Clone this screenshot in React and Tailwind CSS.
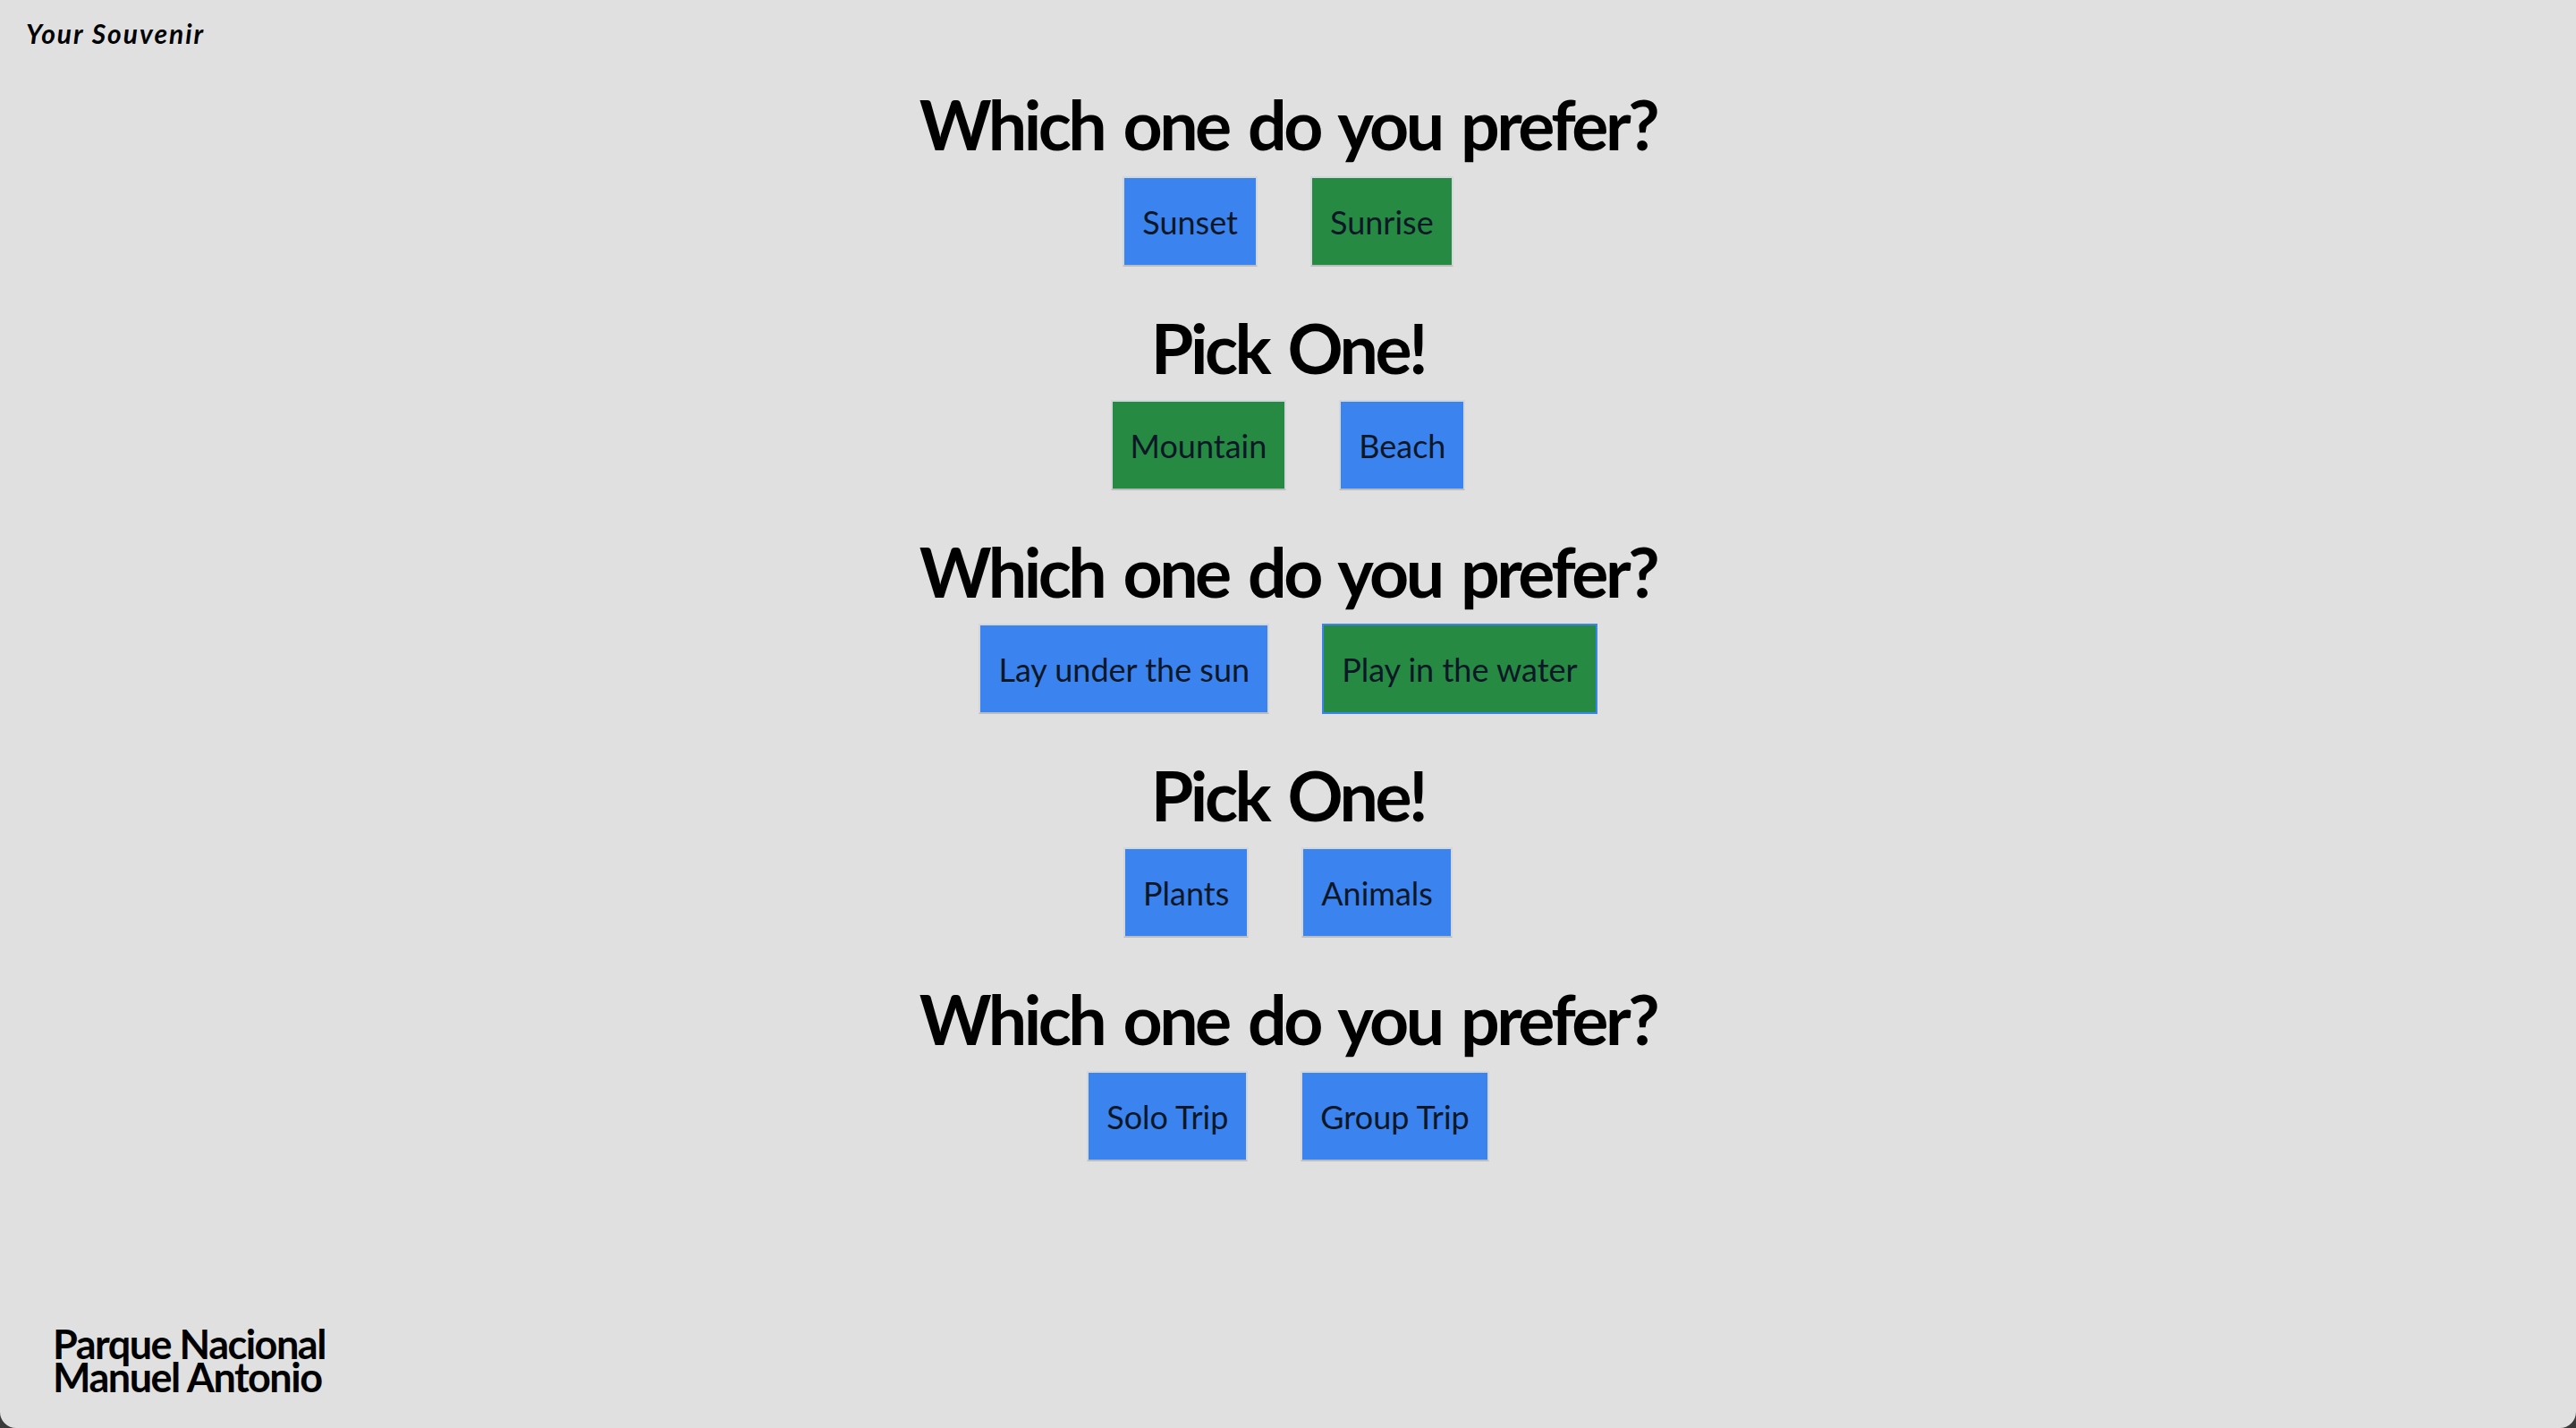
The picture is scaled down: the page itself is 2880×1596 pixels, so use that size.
import React from 'react';

const questions = [
  { title: 'Which one do you prefer?', options: [['Sunset', 'blue'], ['Sunrise', 'green']] },
  { title: 'Pick One!', options: [['Mountain', 'green'], ['Beach', 'blue']] },
  { title: 'Which one do you prefer?', options: [['Lay under the sun', 'blue'], ['Play in the water', 'focus']] },
  { title: 'Pick One!', options: [['Plants', 'blue'], ['Animals', 'blue']] },
  { title: 'Which one do you prefer?', options: [['Solo Trip', 'blue'], ['Group Trip', 'blue']] },
];

const tone = {
  blue: 'bg-[#3b83ee] border-[#d3d6da] border-b-[#bcbcbc]',
  green: 'bg-[#268a43] border-[#d3d6da] border-b-[#bcbcbc]',
  focus: 'bg-[#268a43] border-[#3b83ee]',
};

const Choice = ({ label, kind }) => (
  <button
    type="button"
    className={`border-2 px-[20px] h-[101px] text-[36px] leading-none text-[#0e1726] ${tone[kind]}`}
  >
    {label}
  </button>
);

const App = () => {
  return (
    <div className="bg-[#3a3a3a]">
      <div
        className="h-screen flex flex-col bg-[#e0e0e0] rounded-b-[18px] overflow-hidden"
        style={{ fontFamily: 'Lato, "Open Sans", sans-serif' }}
      >
        <header className="pt-[19px] pl-[29px]">
          <div className="text-[30px] leading-[36px] italic font-bold tracking-[2px] text-black">Your Souvenir</div>
        </header>

        <main className="flex-1 flex flex-col items-center pt-[33px]">
          {questions.map((q, i) => (
            <section key={i} className="flex flex-col items-center h-[250px]">
              <h2 className="text-[77px] leading-[100px] font-bold tracking-[-3.5px] [word-spacing:6px] text-black">{q.title}</h2>
              <div className="mt-[9px] flex gap-[59px]">
                {q.options.map(([label, kind]) => (
                  <Choice key={label} label={label} kind={kind} />
                ))}
              </div>
            </section>
          ))}
        </main>

        <footer className="pl-[59px] pb-[38px]">
          <div className="text-[45px] leading-[37px] font-bold tracking-[-1.5px] text-black">
            <div>Parque Nacional</div>
            <div>Manuel Antonio</div>
          </div>
        </footer>
      </div>
    </div>
  );
};

export default App;
